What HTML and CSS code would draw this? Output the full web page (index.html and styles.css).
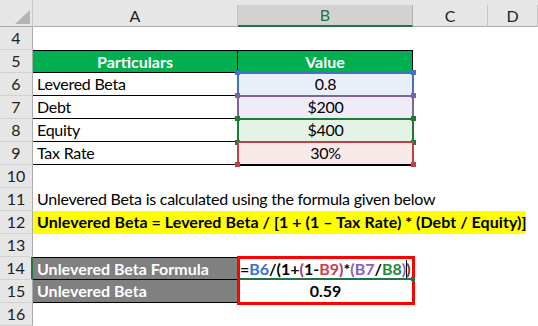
FILE: index.html
```html
<!DOCTYPE html>
<html>
<head>
<meta charset="utf-8">
<link rel="stylesheet" href="styles.css">
</head>
<body>
<div class="sheet">
  <div class="corner"><span class="tri"></span></div>
  <div class="strip"></div>
  <div class="colhead">A</div>
  <div class="colhead sel">B</div>
  <div class="colhead">C</div>
  <div class="colhead">D</div>

  <div class="rowhead">4</div><div class="cell"></div><div class="cell"></div><div class="cell"></div><div class="cell"></div>

  <div class="rowhead">5</div>
  <div class="cell th th-a">Particulars</div>
  <div class="cell th th-b">Value</div>
  <div class="cell"></div><div class="cell"></div>

  <div class="rowhead">6</div>
  <div class="cell ta">Levered Beta</div>
  <div class="cell tb fill-blue"><span class="hl hl-blue"></span><i class="sq sq-tl sq-blue"></i><i class="sq sq-tr sq-blue"></i>0.8</div>
  <div class="cell"></div><div class="cell"></div>

  <div class="rowhead">7</div>
  <div class="cell ta">Debt</div>
  <div class="cell tb fill-purple"><span class="hl hl-purple"></span><i class="sq sq-tl sq-purple"></i><i class="sq sq-tr sq-purple"></i>$200</div>
  <div class="cell"></div><div class="cell"></div>

  <div class="rowhead">8</div>
  <div class="cell ta">Equity</div>
  <div class="cell tb fill-green"><span class="hl hl-green"></span><i class="sq sq-tl sq-green"></i><i class="sq sq-tr sq-green"></i><i class="sq sq-bl sq-green"></i><i class="sq sq-br sq-green"></i>$400</div>
  <div class="cell"></div><div class="cell"></div>

  <div class="rowhead">9</div>
  <div class="cell ta">Tax Rate</div>
  <div class="cell tb fill-red"><span class="hl hl-red last"></span><i class="sq sq-bl2 sq-red"></i><i class="sq sq-br2 sq-red"></i>30%</div>
  <div class="cell"></div><div class="cell"></div>

  <div class="rowhead">10</div><div class="cell"></div><div class="cell"></div><div class="cell"></div><div class="cell"></div>

  <div class="rowhead">11</div>
  <div class="cell text">Unlevered Beta is calculated using the formula given below</div>
  <div class="cell"></div><div class="cell"></div><div class="cell"></div>

  <div class="rowhead">12</div>
  <div class="cell span-row"><div class="yellow">Unlevered Beta = Levered Beta / [1 + (1 – Tax Rate) * (Debt / Equity)]</div></div>

  <div class="rowhead">13</div><div class="cell"></div><div class="cell"></div><div class="cell"></div><div class="cell"></div>

  <div class="rowhead active">14</div>
  <div class="cell gray top">Unlevered Beta Formula</div>
  <div class="cell formula top"><span class="redbox"></span><span class="uline"></span><span class="handle"></span><span class="caret"></span>=<b class="c-blue">B6</b>/(1+<b class="c-maroon">(</b>1-<b class="c-red">B9</b><b class="c-maroon">)</b>*<b class="c-purple">(B7</b>/<b class="c-green">B8</b><b class="c-purple">)</b><b class="c-dark">)</b></div>
  <div class="cell"></div><div class="cell"></div>

  <div class="rowhead">15</div>
  <div class="cell gray">Unlevered Beta</div>
  <div class="cell result">0.59</div>
  <div class="cell"></div><div class="cell"></div>

  <div class="rowhead">16</div><div class="cell"></div><div class="cell"></div><div class="cell"></div><div class="cell"></div>
</div>
</body>
</html>
```

FILE: styles.css
```css
* { box-sizing: border-box; }
html, body { margin: 0; padding: 0; background: #fff; }
body { font-family: Lato, "Liberation Sans", sans-serif; font-size: 16px; color: #000; overflow: hidden; }

.sheet {
  display: grid;
  grid-template-columns: 33px 205px 175px 75px 50px;
  grid-template-rows: 5px 22px repeat(13, 23px);
  width: 538px;
  height: 326px;
}

.corner {
  grid-row: 1 / 3;
  grid-column: 1;
  background: #e6e6e6;
  border-right: 1px solid #c8c8c8;
  border-bottom: 1px solid #ababab;
  position: relative;
}
.tri {
  position: absolute;
  left: 15px;
  top: 10px;
  width: 15px;
  height: 14px;
  background: #b4b4b4;
  clip-path: polygon(100% 0, 100% 100%, 0 100%);
}
.strip {
  grid-row: 1;
  grid-column: 2 / -1;
  background: #e6e6e6;
}
.colhead {
  background: #e6e6e6;
  border-right: 1px solid #c6c6c6;
  border-bottom: 1px solid #ababab;
  display: flex;
  align-items: center;
  justify-content: center;
  color: #222;
  font-size: 16px;
  line-height: 1;
}
.colhead.sel {
  background: #d2d2d2;
  color: #217346;
  border-bottom: 2px solid #217346;
  border-right-color: #b0b0b0;
}

.rowhead {
  background: #e6e6e6;
  border-right: 1px solid #ababab;
  border-bottom: 1px solid #d0d0d0;
  text-align: center;
  line-height: 22px;
  color: #222;
}
.rowhead.active {
  border-right: 2px solid #217346;
}

.cell {
  line-height: 22px;
  padding: 0 4px;
  white-space: nowrap;
  overflow: visible;
  position: relative;
  letter-spacing: -0.25px;
}

.th {
  background: #00b050;
  color: #fff;
  font-weight: bold;
  text-align: center;
  border-top: 1px solid #000;
  border-bottom: 1px solid #000;
  line-height: 21px;
  letter-spacing: 0;
}
.th-a { border-right: 1px solid #000; }
.th-b { border-right: 1px solid #000; }

.ta { border-bottom: 1px solid #000; }
.tb { text-align: center; }
.fill-blue { background: #e9eef8; }
.fill-purple { background: #efebf7; }
.fill-green { background: #e5f2e6; }
.fill-red { background: #f8e9e9; }

.hl {
  position: absolute;
  top: -1px;
  left: -1px;
  right: -1px;
  bottom: 0;
  border: 2px solid;
  border-bottom: 0;
}
.hl.last { bottom: -1px; border-bottom: 2px solid; }
.hl-blue { border-color: #4472c4; }
.hl-purple { border-color: #8064a2; }
.hl-green { border-color: #1e7b34; }
.hl-red { border-color: #c0404a; }

.sq {
  position: absolute;
  width: 5px;
  height: 5px;
  z-index: 2;
}
.sq-tl { top: -3px; left: -3px; }
.sq-tr { top: -3px; right: -3px; }
.sq-bl { bottom: -3px; left: -3px; }
.sq-br { bottom: -3px; right: -3px; }
.sq-bl2 { bottom: -2px; left: -3px; }
.sq-br2 { bottom: -2px; right: -3px; }
.sq-blue { background: #4472c4; }
.sq-purple { background: #8064a2; }
.sq-green { background: #1e7b34; }
.sq-red { background: #c0404a; }
.fill-purple, .fill-green, .fill-red { z-index: 1; }
.fill-blue { z-index: 0; }

.text { overflow: visible; }

.span-row {
  grid-column: 2 / -1;
  padding: 0;
  letter-spacing: 0;
}
.yellow {
  background: #ffff00;
  font-weight: bold;
  padding: 0 4px;
  margin-right: 12px;
  height: 23px;
  line-height: 22px;
  letter-spacing: 0.05px;
}

.gray {
  background: #808080;
  color: #fff;
  font-weight: bold;
  border-bottom: 1px solid #000;
  letter-spacing: 0;
}
.top { border-top: 1px solid #000; line-height: 21px; }

.formula {
  font-weight: bold;
  padding-left: 2px;
  border-bottom: 1px solid #000;
  letter-spacing: 0;
}
.formula b { font-weight: bold; }
.c-blue { color: #3b6fd0; }
.c-red { color: #d03b4b; }
.c-maroon { color: #a8326a; }
.c-purple { color: #8a5cc0; }
.c-green { color: #1e8a3a; }
.c-dark { color: #6b3a20; }

.redbox {
  position: absolute;
  top: -2px;
  left: -1px;
  right: -2px;
  height: 49px;
  border: 3px solid #ff0000;
  z-index: 3;
}
.uline {
  position: absolute;
  left: 2px;
  right: 1px;
  bottom: -1px;
  height: 2px;
  background: #217346;
  z-index: 2;
}
.handle {
  position: absolute;
  right: -2px;
  bottom: -2px;
  width: 4px;
  height: 4px;
  background: #217346;
  z-index: 4;
}
.caret {
  position: absolute;
  left: 168px;
  top: 2px;
  width: 1px;
  height: 19px;
  background: #000;
}

.result {
  font-weight: bold;
  text-align: center;
  border-bottom: 1px solid #000;
  letter-spacing: 0;
}
```
